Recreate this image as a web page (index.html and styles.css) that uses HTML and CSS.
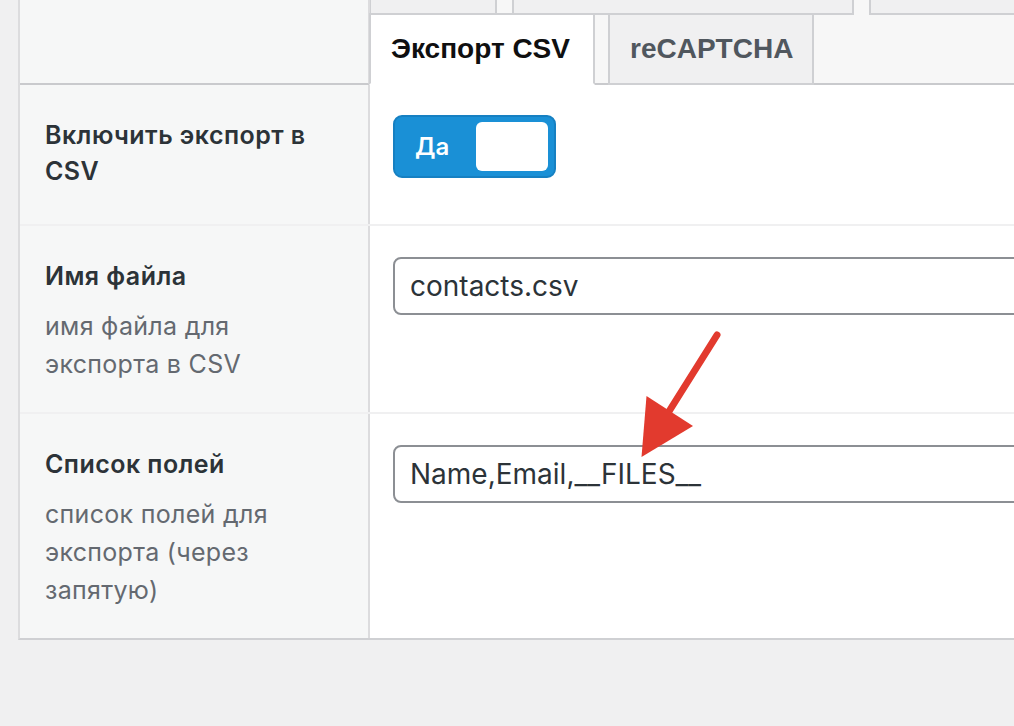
FILE: index.html
```html
<!DOCTYPE html>
<html lang="ru">
<head>
<meta charset="utf-8">
<title>Экспорт CSV</title>
<link rel="stylesheet" href="styles.css">
</head>
<body>
<div class="panel">
  <div class="row head">
    <div class="th th-head"></div>
    <div class="td tabs-cell">
      <div class="tabs-prev">
        <span class="ptab ptab-a"></span>
        <span class="ptab ptab-b"></span>
        <span class="ptab ptab-c"></span>
      </div>
      <nav class="tabs">
        <a class="tab tab-active">Экспорт CSV</a>
        <a class="tab">reCAPTCHA</a>
      </nav>
    </div>
  </div>

  <div class="row row-first">
    <div class="th">
      <div class="label">Включить экспорт в CSV</div>
    </div>
    <div class="td">
      <div class="toggle">
        <span class="toggle-text">Да</span>
        <span class="toggle-knob"></span>
      </div>
    </div>
  </div>

  <div class="row">
    <div class="th">
      <div class="label">Имя файла</div>
      <div class="desc">имя файла для<br>экспорта в CSV</div>
    </div>
    <div class="td">
      <div class="input">contacts.csv</div>
    </div>
  </div>

  <div class="row row-last">
    <div class="th">
      <div class="label">Список полей</div>
      <div class="desc">список полей для<br>экспорта (через<br>запятую)</div>
    </div>
    <div class="td">
      <div class="input">Name,Email,__FILES__</div>
    </div>
  </div>
</div>

<svg class="arrow" width="100" height="140" viewBox="0 0 100 140">
  <line x1="87" y1="10" x2="38" y2="88" stroke="#e23a2e" stroke-width="7" stroke-linecap="round"/>
  <polygon points="11.5,132 16.5,71 63,101" fill="#e23a2e"/>
</svg>
</body>
</html>
```

FILE: styles.css
```css
* { box-sizing: border-box; }

html, body {
  margin: 0;
  padding: 0;
}

body {
  background: #f0f0f1;
  width: 1014px;
  height: 726px;
  overflow: hidden;
  position: relative;
  font-family: Inter, "Noto Sans", sans-serif;
}

.panel {
  margin-left: 18px;
  width: 996px;
  border-left: 2px solid #dcdcde;
  border-bottom: 2px solid #cfd0d3;
  background: #ffffff;
}

.row {
  display: grid;
  grid-template-columns: 350px 1fr;
  border-bottom: 2px solid #f0f0f1;
}

.row-last { border-bottom: none; }

.head { border-bottom: none; }

.th {
  background: #f6f7f7;
  border-right: 2px solid #dcdcde;
  padding: 32px 20px 29px 25px;
}

.td {
  padding: 31px 0 30px 23px;
  overflow: hidden;
}

.th-head {
  border-bottom: 2px solid #c9cacd;
  height: 85px;
  padding: 0;
}

.tabs-cell {
  padding: 0;
  height: 85px;
  background: #f7f7f7;
  border-bottom: 2px solid #c9cacd;
  overflow: visible;
}

.tabs-prev {
  display: flex;
  gap: 15px;
  height: 15px;
  overflow: hidden;
}

.ptab {
  display: block;
  flex: none;
  height: 15px;
  background: #f0f0f1;
  border: 2px solid #cfd0d3;
  border-top: none;
}

.ptab-a { width: 128px; margin-left: -1px; }
.ptab-b { width: 342px; }
.ptab-c { width: 300px; }

.tabs {
  display: flex;
  gap: 13px;
  margin-top: -2px;
  margin-bottom: -2px;
  position: relative;
}

.tab {
  display: block;
  font-family: "Liberation Sans", Arial, sans-serif;
  font-weight: 700;
  font-size: 28px;
  line-height: 48px;
  padding: 10px 20px;
  background: #f0f0f1;
  color: #50575e;
  border: 2px solid #cfd0d3;
  text-decoration: none;
}

.tab-active {
  background: #ffffff;
  color: #0f0f10;
  border-bottom-color: #ffffff;
  margin-left: -1px;
  width: 226px;
}

.tab:not(.tab-active) { width: 206px; }

.label {
  font-size: 25px;
  font-weight: 600;
  line-height: 36px;
  letter-spacing: 0.45px;
  color: #2c3338;
}

.desc {
  margin-top: 13px;
  font-size: 25px;
  line-height: 38px;
  letter-spacing: 0.3px;
  color: #646970;
}

.row-first .th { padding-bottom: 35px; }
.row-first .td { padding-top: 30px; }

.toggle {
  width: 163px;
  height: 63px;
  border-radius: 9px;
  background: #1a90d6;
  border: 2px solid #1680c2;
  display: flex;
  align-items: center;
  justify-content: space-between;
  padding: 0 6px 0 20px;
}

.toggle-text {
  color: #ffffff;
  font-size: 24px;
  font-weight: 600;
}

.toggle-knob {
  width: 72px;
  height: 49px;
  border-radius: 6px;
  background: #ffffff;
}

.input {
  width: 700px;
  height: 58px;
  border: 2px solid #8c8f94;
  border-radius: 8px;
  background: #ffffff;
  padding: 0 15px;
  font-size: 28px;
  line-height: 54px;
  color: #2c3338;
}

.arrow {
  position: absolute;
  left: 630px;
  top: 325px;
}
```
